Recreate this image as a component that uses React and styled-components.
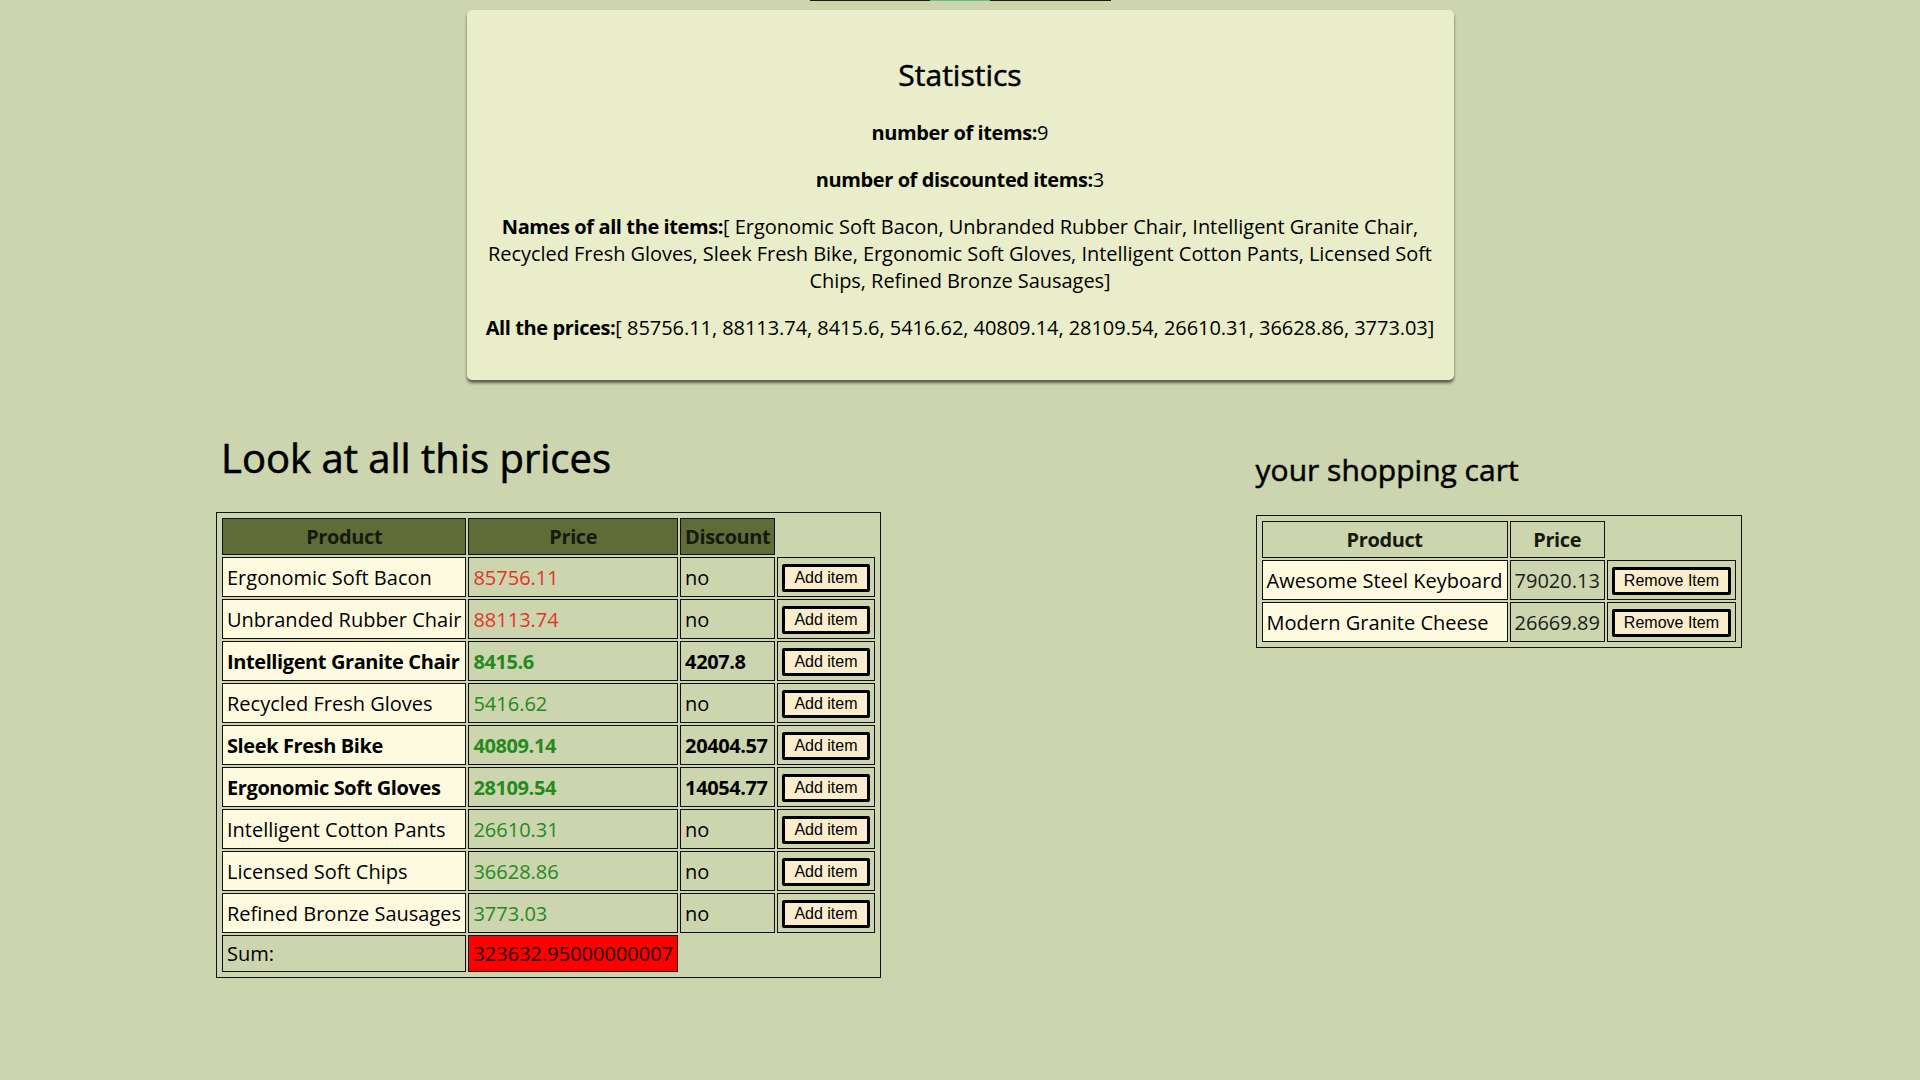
import React from "react";
import styled, { createGlobalStyle } from "styled-components";

const GlobalStyle = createGlobalStyle`
  html, body { margin: 0; padding: 0; }
  body {
    background: #ccd5ae;
    font-family: "Open Sans", "Noto Sans", sans-serif;
    font-size: 20px;
    color: #000;
  }
`;

const TopNav = styled.div`
  display: flex;
  justify-content: center;
  height: 1px;
`;

const NavSeg = styled.div`
  width: ${(p) => p.$w}px;
  height: 1px;
  background: ${(p) => (p.$active ? "#5fc08a" : "#1b1b14")};
`;

const Card = styled.section`
  width: 951px;
  margin: 9px auto 0;
  padding: 20px 18px 19px;
  background: #e9edc9;
  border-radius: 5px;
  box-shadow: 0 3px 3px rgba(0, 0, 0, 0.55);
  text-align: center;
`;

const CardTitle = styled.h2`
  font-size: 30px;
  font-weight: 400;
  -webkit-text-stroke: 0.5px currentColor;
  margin: 24px 0 24px;
`;

const StatLine = styled.p`
  margin: 20px 0;
  letter-spacing: -0.05px;
`;

const Label = styled.b`
  font-weight: 700;
  letter-spacing: -0.4px;
`;

const Content = styled.main`
  display: flex;
  justify-content: space-between;
  align-items: flex-start;
  padding: 23px 178px 40px 216px;
`;

const PriceSection = styled.section``;

const CartSection = styled.section`
  padding-top: 21px;
`;

const BigTitle = styled.h1`
  font-size: 40px;
  font-weight: 400;
  -webkit-text-stroke: 0.6px currentColor;
  margin: 27px 0 27px 5px;
`;

const CartTitle = styled.h2`
  font-size: 30px;
  font-weight: 400;
  -webkit-text-stroke: 0.5px currentColor;
  margin: 25px 0;
`;

const Table = styled.table`
  border: 1px solid #111;
  padding: 3px;
  border-spacing: 2px;
`;

const Th = styled.th`
  border: 1px solid #111;
  padding: 4px;
  font-weight: 700;
  letter-spacing: -0.4px;
  text-align: center;
  color: #161a0c;
  background: ${(p) => (p.$dark ? "#606c38" : "transparent")};
`;

const Td = styled.td`
  border: 1px solid #111;
  padding: 4px;
  text-align: left;
  white-space: nowrap;
  font-weight: ${(p) => (p.$bold ? 700 : 400)};
  letter-spacing: ${(p) => (p.$bold ? "-0.4px" : "0")};
  color: ${(p) => p.$color || "#000"};
  background: ${(p) => p.$bg || "transparent"};
`;

const Button = styled.button`
  font-family: "Liberation Sans", Arial, sans-serif;
  font-size: 16px;
  padding: 2px 9px;
  border: 3px solid #000;
  border-radius: 2px;
  background: #faedcd;
  color: #000;
  cursor: pointer;
`;

const items = [
  { name: "Ergonomic Soft Bacon", price: 85756.11, discount: null },
  { name: "Unbranded Rubber Chair", price: 88113.74, discount: null },
  { name: "Intelligent Granite Chair", price: 8415.6, discount: 4207.8 },
  { name: "Recycled Fresh Gloves", price: 5416.62, discount: null },
  { name: "Sleek Fresh Bike", price: 40809.14, discount: 20404.57 },
  { name: "Ergonomic Soft Gloves", price: 28109.54, discount: 14054.77 },
  { name: "Intelligent Cotton Pants", price: 26610.31, discount: null },
  { name: "Licensed Soft Chips", price: 36628.86, discount: null },
  { name: "Refined Bronze Sausages", price: 3773.03, discount: null },
];

const cart = [
  { name: "Awesome Steel Keyboard", price: 79020.13 },
  { name: "Modern Granite Cheese", price: 26669.89 },
];

const RED = "#e3342a";
const GREEN = "#238a1e";
const CREAM = "#fefae0";

export default function App() {
  return (
    <>
      <GlobalStyle />
      <TopNav>
        <NavSeg $w={120} />
        <NavSeg $w={60} $active />
        <NavSeg $w={121} />
      </TopNav>
      <Card>
        <CardTitle>Statistics</CardTitle>
        <StatLine>
          <Label>number of items:</Label>9
        </StatLine>
        <StatLine>
          <Label>number of discounted items:</Label>3
        </StatLine>
        <StatLine>
          <Label>Names of all the items:</Label>[ {items.map((i) => i.name).join(", ")}]
        </StatLine>
        <StatLine>
          <Label>All the prices:</Label>[ {items.map((i) => i.price).join(", ")}]
        </StatLine>
      </Card>
      <Content>
        <PriceSection>
          <BigTitle>Look at all this prices</BigTitle>
          <Table>
            <thead>
              <tr>
                <Th $dark>Product</Th>
                <Th $dark>Price</Th>
                <Th $dark>Discount</Th>
              </tr>
            </thead>
            <tbody>
              {items.map((it) => {
                const bold = it.discount !== null;
                return (
                  <tr key={it.name}>
                    <Td $bg={CREAM} $bold={bold}>{it.name}</Td>
                    <Td $bold={bold} $color={it.price > 80000 ? RED : GREEN}>
                      {it.price}
                    </Td>
                    <Td $bold={bold}>{bold ? it.discount : "no"}</Td>
                    <Td>
                      <Button>Add item</Button>
                    </Td>
                  </tr>
                );
              })}
              <tr>
                <Td>Sum:</Td>
                <Td $bg="#ff0000" $color="#1a0000">323632.95000000007</Td>
              </tr>
            </tbody>
          </Table>
        </PriceSection>
        <CartSection>
          <CartTitle>your shopping cart</CartTitle>
          <Table>
            <thead>
              <tr>
                <Th>Product</Th>
                <Th>Price</Th>
              </tr>
            </thead>
            <tbody>
              {cart.map((c) => (
                <tr key={c.name}>
                  <Td $bg={CREAM}>{c.name}</Td>
                  <Td $color="#1c1c1c">{c.price}</Td>
                  <Td>
                    <Button>Remove Item</Button>
                  </Td>
                </tr>
              ))}
            </tbody>
          </Table>
        </CartSection>
      </Content>
    </>
  );
}
